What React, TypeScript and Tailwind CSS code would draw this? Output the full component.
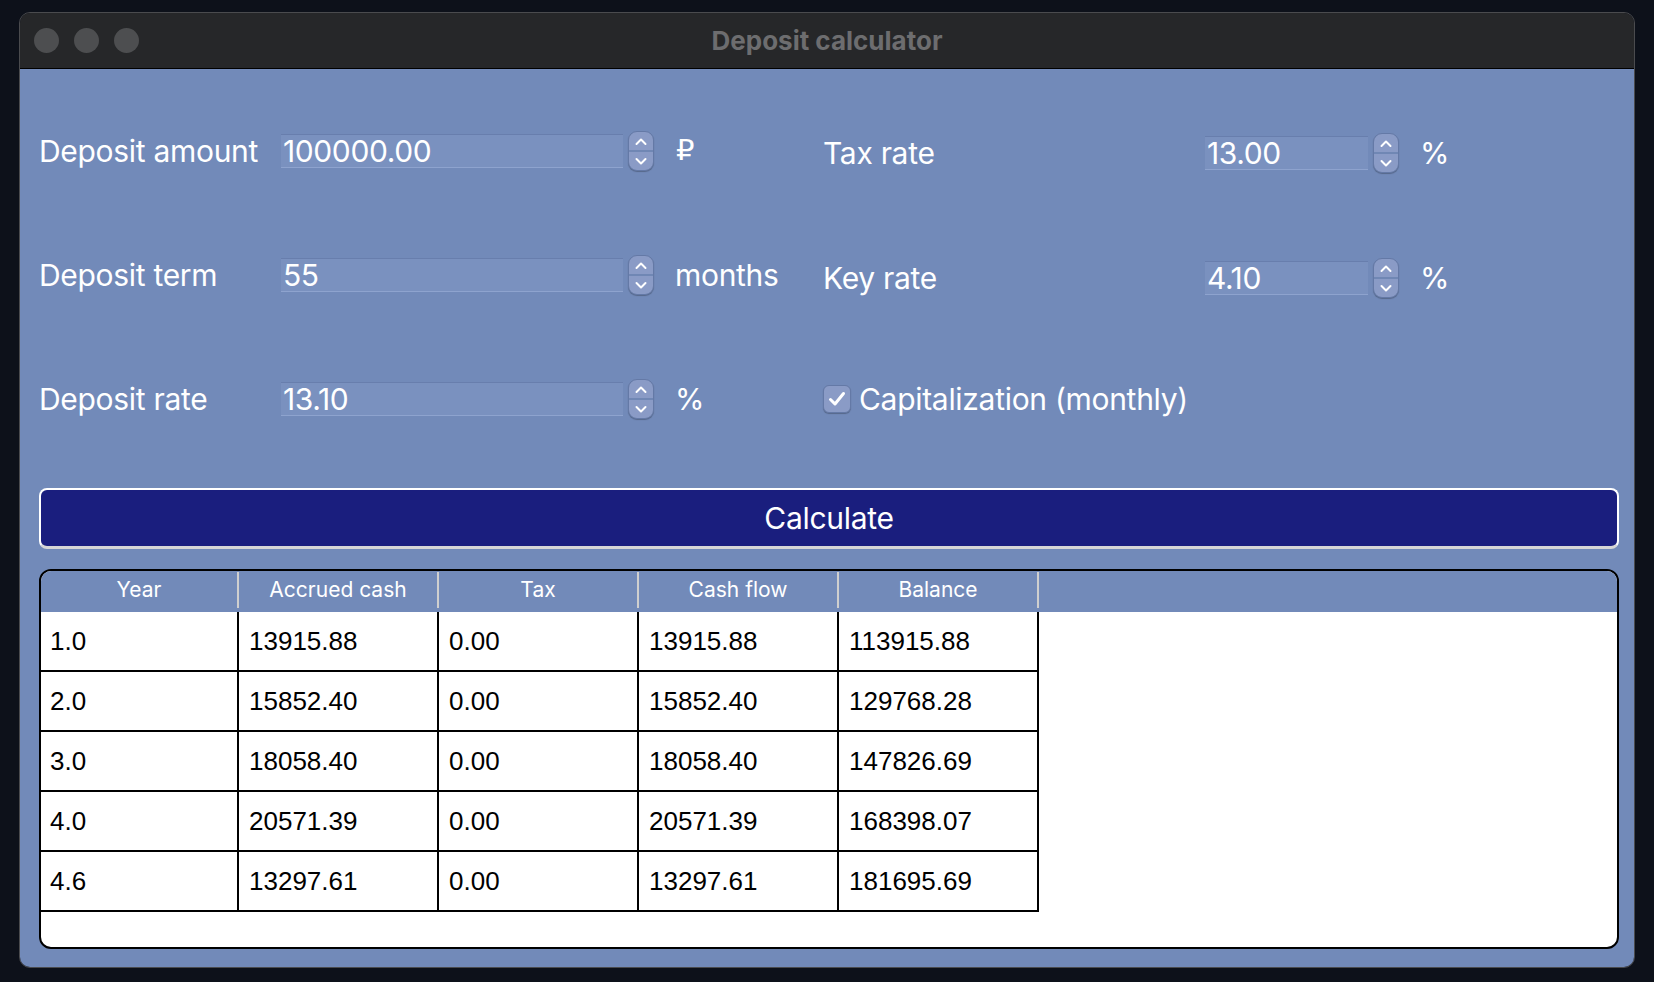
import React from "react";

type Row = [string, string, string, string, string];

const rows: Row[] = [
  ["1.0", "13915.88", "0.00", "13915.88", "113915.88"],
  ["2.0", "15852.40", "0.00", "15852.40", "129768.28"],
  ["3.0", "18058.40", "0.00", "18058.40", "147826.69"],
  ["4.0", "20571.39", "0.00", "20571.39", "168398.07"],
  ["4.6", "13297.61", "0.00", "13297.61", "181695.69"],
];

const headers = ["Year", "Accrued cash", "Tax", "Cash flow", "Balance"];

function Spinner() {
  return (
    <div className="flex h-[40px] w-[26px] flex-col overflow-hidden rounded-[9px] border border-[#6479a6] bg-[#8a9bc6] shadow-[0_1px_1px_rgba(0,0,0,0.25)]">
      <div className="flex flex-1 items-center justify-center border-b-2 border-[#7087b4]">
        <svg width="14" height="9" viewBox="0 0 14 9" fill="none">
          <path d="M2.5 7 L7 2.5 L11.5 7" stroke="#ffffff" strokeWidth="2" strokeLinecap="round" strokeLinejoin="round" />
        </svg>
      </div>
      <div className="flex flex-1 items-center justify-center">
        <svg width="14" height="9" viewBox="0 0 14 9" fill="none">
          <path d="M2.5 2 L7 6.5 L11.5 2" stroke="#ffffff" strokeWidth="2" strokeLinecap="round" strokeLinejoin="round" />
        </svg>
      </div>
    </div>
  );
}

function NumberField({ value, width }: { value: string; width: string }) {
  return (
    <div
      className={`flex h-[34px] items-center border-t border-b border-t-[#687ead] border-b-[#8ea3ce] bg-[#7a91bf] pl-[2px] ${width}`}
    >
      <span className="text-[30px] leading-none tracking-[-0.4px] text-white">{value}</span>
    </div>
  );
}

export default function App() {
  return (
    <div
      className="h-[982px] w-[1654px] bg-[#0d111a] pl-[19px] pt-[12px]"
      style={{ fontFamily: "Inter, 'DejaVu Sans', sans-serif" }}
    >
      <div className="flex h-[956px] w-[1616px] flex-col overflow-hidden rounded-[11px] border border-[#4a4b4e]">
        {/* title bar */}
        <div className="relative flex h-[56px] shrink-0 items-center border-b border-black bg-[#262729] pl-[14px]">
          <div className="flex gap-[15px]">
            <div className="h-[25px] w-[25px] rounded-full bg-[#4d4e50]" />
            <div className="h-[25px] w-[25px] rounded-full bg-[#4d4e50]" />
            <div className="h-[25px] w-[25px] rounded-full bg-[#4d4e50]" />
          </div>
          <div className="absolute inset-0 flex items-center justify-center">
            <span className="text-[26px] font-bold text-[#6d6d6f]">Deposit calculator</span>
          </div>
        </div>

        {/* body */}
        <div className="flex flex-1 flex-col bg-[#728ab9] pb-[18px] pl-[19px] pr-[15px] pt-[20px] text-white">
          <div className="flex">
            <div className="flex w-[784px] flex-col">
              <div className="flex h-[124px] items-center">
                <span className="w-[242px] text-[30px] tracking-[-0.3px]">Deposit amount</span>
                <NumberField value="100000.00" width="w-[342px]" />
                <div className="ml-[5px]">
                  <Spinner />
                </div>
                <span className="ml-[22px] text-[29px]" style={{ fontFamily: "'DejaVu Sans', sans-serif" }}>
                  ₽
                </span>
              </div>
              <div className="flex h-[124px] items-center">
                <span className="w-[242px] text-[30px] tracking-[-0.3px]">Deposit term</span>
                <NumberField value="55" width="w-[342px]" />
                <div className="ml-[5px]">
                  <Spinner />
                </div>
                <span className="ml-[21px] text-[30px] tracking-[-0.3px]">months</span>
              </div>
              <div className="flex h-[124px] items-center">
                <span className="w-[242px] text-[30px] tracking-[-0.3px]">Deposit rate</span>
                <NumberField value="13.10" width="w-[342px]" />
                <div className="ml-[5px]">
                  <Spinner />
                </div>
                <span className="ml-[21px] text-[30px]">%</span>
              </div>
            </div>

            <div className="flex flex-col">
              <div className="flex h-[124px] items-center pt-[4px]">
                <span className="w-[382px] text-[30px] tracking-[-0.3px]">Tax rate</span>
                <NumberField value="13.00" width="w-[163px]" />
                <div className="ml-[5px]">
                  <Spinner />
                </div>
                <span className="ml-[21px] text-[30px]">%</span>
              </div>
              <div className="flex h-[124px] items-center pt-[6px]">
                <span className="w-[382px] text-[30px] tracking-[-0.3px]">Key rate</span>
                <NumberField value="4.10" width="w-[163px]" />
                <div className="ml-[5px]">
                  <Spinner />
                </div>
                <span className="ml-[21px] text-[30px]">%</span>
              </div>
              <div className="flex h-[124px] items-center gap-[8px]">
                <div className="flex h-[28px] w-[28px] items-center justify-center rounded-[6px] border border-[#6479a6] bg-[#8a9bc6] shadow-[0_1px_1px_rgba(0,0,0,0.25)]">
                  <svg width="20" height="18" viewBox="0 0 20 18" fill="none">
                    <path d="M3.5 9.5 L8 14 L16.5 3.5" stroke="#ffffff" strokeWidth="3" strokeLinecap="round" strokeLinejoin="round" />
                  </svg>
                </div>
                <span className="text-[30px] tracking-[-0.3px]">Capitalization (monthly)</span>
              </div>
            </div>
          </div>

          {/* calculate button */}
          <button className="mt-[27px] flex h-[61px] w-full items-center justify-center rounded-[8px] border-2 border-b-[3px] border-white border-b-[#d6d6d6] bg-[#1a1e7e] text-[30px] tracking-[-0.3px] text-white">
            Calculate
          </button>

          {/* table */}
          <div className="mt-[20px] flex flex-1 flex-col overflow-hidden rounded-[12px] border-2 border-black bg-white">
            <div className="flex h-[41px] shrink-0 items-start bg-[#728ab9] pt-[1px]">
              {headers.map((h) => (
                <div key={h} className="flex h-[36px] w-[200px] items-center justify-center border-r-2 border-[#cfcfcf] text-[21px] text-white first:w-[198px]">
                  {h}
                </div>
              ))}
            </div>
            {rows.map((r, i) => (
              <div key={i} className="flex">
                {r.map((c, j) => (
                  <div
                    key={j}
                    className="flex h-[60px] w-[200px] items-center border-b-2 border-r-2 border-black pl-[10px] text-[26px] text-black first:w-[198px] first:pl-[9px]"
                    style={{ fontFamily: "'Liberation Sans', Arial, sans-serif" }}
                  >
                    {c}
                  </div>
                ))}
              </div>
            ))}
          </div>
        </div>
      </div>
    </div>
  );
}
